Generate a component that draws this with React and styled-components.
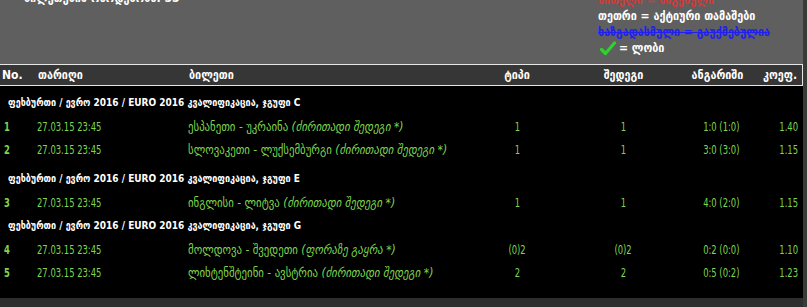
import React from 'react';
import styled, { createGlobalStyle } from 'styled-components';

const Global = createGlobalStyle`
  html, body { margin: 0; padding: 0; background: #3a3a3a; overflow: hidden; }
  body { font-family: "Liberation Sans Narrow", "DejaVu Sans Condensed", "DejaVu Sans", sans-serif; }
`;

const Page = styled.div`
  width: 803px;
  height: 307px;
  display: flex;
  flex-direction: column;
`;

const TopPanel = styled.div`
  height: 64px;
  flex-shrink: 0;
  background: #5f5f5f;
  display: flex;
  justify-content: space-between;
  overflow: hidden;
`;

const Counter = styled.div`
  margin: -9px 0 0 24px;
  color: #ffffff;
  font-size: 12px;
  font-weight: bold;
  line-height: 14px;
`;

const Legend = styled.div`
  width: 205px;
  margin-top: -8px;
  display: flex;
  flex-direction: column;
`;

const LegendLine = styled.div`
  height: 16px;
  line-height: 16px;
  display: flex;
  align-items: center;
  gap: 3px;
  font-size: 12px;
  font-weight: bold;
  color: ${p => p.$color};
  text-decoration: ${p => (p.$strike ? 'line-through' : 'none')};
`;

const Check = styled.svg`
  width: 16px;
  height: 16px;
  margin-left: 2px;
`;

const HeaderRow = styled.div`
  display: grid;
  grid-template-columns: 37px 151px 289px 80px 133px 55px 1fr;
  height: 20px;
  align-items: center;
  background: #363636;
  border: 1px solid #e6e6e6;
  border-left: none;
  color: #ffffff;
  font-size: 12px;
  font-weight: bold;
  flex-shrink: 0;
`;

const HeadCell = styled.div`
  text-align: ${p => p.$align || 'left'};
  padding-left: ${p => p.$pl || 0}px;
  padding-right: ${p => p.$pr || 0}px;
  white-space: nowrap;
`;

const Body = styled.div`
  background: #000000;
  padding: 5px 0 14px;
  display: flex;
  flex-direction: column;
`;

const GroupTitle = styled.div`
  height: 24px;
  line-height: 24px;
  margin-top: ${p => p.$gap || 0}px;
  padding-left: 8px;
  color: #ffffff;
  font-size: 10px;
  font-weight: bold;
  white-space: nowrap;
`;

const Row = styled.div`
  display: grid;
  grid-template-columns: 37px 151px 289px 80px 133px 55px 1fr;
  height: 23px;
  align-items: center;
  color: #7fd64f;
  font-size: 12px;
`;

const Cell = styled.div`
  display: flex;
  justify-content: ${p => (p.$align === 'center' ? 'center' : p.$align === 'right' ? 'flex-end' : 'flex-start')};
  padding-left: ${p => p.$pl || 0}px;
  padding-right: ${p => p.$pr || 0}px;
  font-weight: ${p => (p.$bold ? 'bold' : 'normal')};
  white-space: nowrap;
`;

const Narrow = styled.span`
  display: inline-block;
  transform: scaleX(0.78);
  transform-origin: ${p => (p.$origin || 'left')} center;
`;

const Match = styled.span`
  font-size: 12px;
`;

const Note = styled.span`
  font-style: italic;
  font-size: 12px;
`;

const Footer = styled.div`
  flex: 1;
  background: #2e2e2e;
`;

const groups = [
  {
    title: 'ფეხბურთი / ევრო 2016 / EURO 2016 კვალიფიკაცია, ჯგუფი C',
    gap: 0,
    rows: [
      { n: 1, date: '27.03.15 23:45', match: 'ესპანეთი - უკრაინა', note: '(ძირითადი შედეგი *)', type: '1', res: '1', score: '1:0 (1:0)', coef: '1.40' },
      { n: 2, date: '27.03.15 23:45', match: 'სლოვაკეთი - ლუქსემბურგი', note: '(ძირითადი შედეგი *)', type: '1', res: '1', score: '3:0 (3:0)', coef: '1.15' },
    ],
  },
  {
    title: 'ფეხბურთი / ევრო 2016 / EURO 2016 კვალიფიკაცია, ჯგუფი E',
    gap: 6,
    rows: [
      { n: 3, date: '27.03.15 23:45', match: 'ინგლისი - ლიტვა', note: '(ძირითადი შედეგი *)', type: '1', res: '1', score: '4:0 (2:0)', coef: '1.15' },
    ],
  },
  {
    title: 'ფეხბურთი / ევრო 2016 / EURO 2016 კვალიფიკაცია, ჯგუფი G',
    gap: 0,
    rows: [
      { n: 4, date: '27.03.15 23:45', match: 'მოლდოვა - შვედეთი', note: '(ფორაზე გაყრა *)', type: '(0)2', res: '(0)2', score: '0:2 (0:0)', coef: '1.10' },
      { n: 5, date: '27.03.15 23:45', match: 'ლიხტენშტეინი - ავსტრია', note: '(ძირითადი შედეგი *)', type: '2', res: '2', score: '0:5 (0:2)', coef: '1.23' },
    ],
  },
];

export default function App() {
  return (
    <>
      <Global />
      <Page>
        <TopPanel>
          <Counter>ბილეთების რაოდენობა: 55</Counter>
          <Legend>
            <LegendLine $color="#d23a3a">წითელი = წაგებული</LegendLine>
            <LegendLine $color="#ffffff">თეთრი = აქტიური თამაშები</LegendLine>
            <LegendLine $color="#2020f0" $strike>ხაზგადასმული = გაუქმებულია</LegendLine>
            <LegendLine $color="#ffffff">
              <Check viewBox="0 0 16 16">
                <path d="M1.5 9.5 L5.5 13.5 L14.5 3" fill="none" stroke="#2fd12f" strokeWidth="3.2" strokeLinecap="round" strokeLinejoin="round" />
              </Check>
              = ლობი
            </LegendLine>
          </Legend>
        </TopPanel>
        <HeaderRow>
          <HeadCell $pl={2}>No.</HeadCell>
          <HeadCell $pl={1}>თარიღი</HeadCell>
          <HeadCell $pl={1}>ბილეთი</HeadCell>
          <HeadCell $align="center">ტიპი</HeadCell>
          <HeadCell $align="center">შედეგი</HeadCell>
          <HeadCell $align="center">ანგარიში</HeadCell>
          <HeadCell $align="right" $pr={5}>კოეფ.</HeadCell>
        </HeaderRow>
        <Body>
          {groups.map(g => (
            <React.Fragment key={g.title}>
              <GroupTitle $gap={g.gap}>{g.title}</GroupTitle>
              {g.rows.map(r => (
                <Row key={r.n}>
                  <Cell $pl={4} $bold><Narrow>{r.n}</Narrow></Cell>
                  <Cell><Narrow>{r.date}</Narrow></Cell>
                  <Cell>
                    <span><Match>{r.match}</Match> <Note>{r.note}</Note></span>
                  </Cell>
                  <Cell $align="center"><Narrow $origin="center">{r.type}</Narrow></Cell>
                  <Cell $align="center"><Narrow $origin="center">{r.res}</Narrow></Cell>
                  <Cell $align="center" $pl={8}><Narrow $origin="center">{r.score}</Narrow></Cell>
                  <Cell $align="right" $pr={5}><Narrow $origin="right">{r.coef}</Narrow></Cell>
                </Row>
              ))}
            </React.Fragment>
          ))}
        </Body>
        <Footer />
      </Page>
    </>
  );
}
